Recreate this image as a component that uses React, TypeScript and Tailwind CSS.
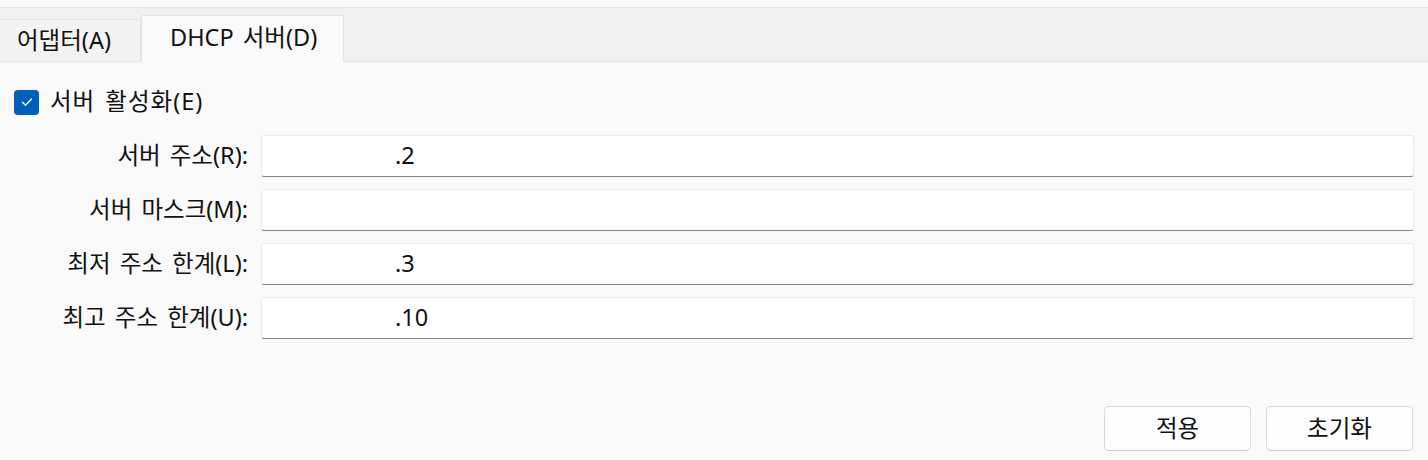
import React from "react";

const font = { fontFamily: '"Noto Sans", "Noto Sans CJK KR", sans-serif' };

const rows = [
  { label: "서버 주소(R):", value: ".2" },
  { label: "서버 마스크(M):", value: "" },
  { label: "최저 주소 한계(L):", value: ".3" },
  { label: "최고 주소 한계(U):", value: ".10" },
];

export default function App() {
  return (
    <div
      className="w-[1428px] h-[460px] bg-[#f9f9f9] flex flex-col text-[23.5px] text-[#111111] overflow-hidden [word-spacing:3px]"
      style={font}
    >
      <div className="h-[7px] shrink-0" />
      <div className="h-[55px] shrink-0 bg-[#f0f0f0] border-t border-b border-[#e5e5e5] flex items-end">
        <div className="h-[42px] w-[141px] bg-[#f3f3f3] border-t border-r border-[#e5e5e5] flex items-center pl-[17px] leading-none">
          어댑터(A)
        </div>
        <div className="h-[47px] w-[203px] -mb-px bg-[#f9f9f9] border-t border-x border-[#e5e5e5] flex items-center pl-[28px] leading-none pb-[2px]">
          DHCP 서버(D)
        </div>
      </div>

      <div className="flex items-center mt-[27px] ml-[14px] h-[26px]">
        <div className="w-[25px] h-[25px] rounded-[4px] bg-[#005fb8] flex items-center justify-center">
          <svg width="16" height="16" viewBox="0 0 16 16" fill="none">
            <path d="M3.5 8.3 L6.5 11.2 L12.5 5" stroke="white" strokeWidth="1.3" strokeLinecap="round" strokeLinejoin="round" />
          </svg>
        </div>
        <span className="ml-[11px] leading-none [letter-spacing:1px]">서버 활성화(E)</span>
      </div>

      <div className="flex flex-col gap-[12px] mt-[20px]">
        {rows.map((r) => (
          <div key={r.label} className="flex items-center h-[42px]">
            <div className="w-[248px] text-right leading-none whitespace-nowrap">{r.label}</div>
            <div className="ml-[13px] w-[1153px] h-[42px] bg-white border border-[#ebebeb] border-b-[#868686] rounded-[3px] flex items-center pl-[133px] leading-none">
              {r.value}
            </div>
          </div>
        ))}
      </div>

      <div className="flex justify-end gap-[15px] mt-[67px] pr-[15px]">
        <button className="w-[147px] h-[45px] bg-[#fdfdfd] border border-[#d9d9d9] border-b-[#cccccc] rounded-[5px] flex items-center justify-center leading-none">
          적용
        </button>
        <button className="w-[147px] h-[45px] bg-[#fdfdfd] border border-[#d9d9d9] border-b-[#cccccc] rounded-[5px] flex items-center justify-center leading-none">
          초기화
        </button>
      </div>
    </div>
  );
}
